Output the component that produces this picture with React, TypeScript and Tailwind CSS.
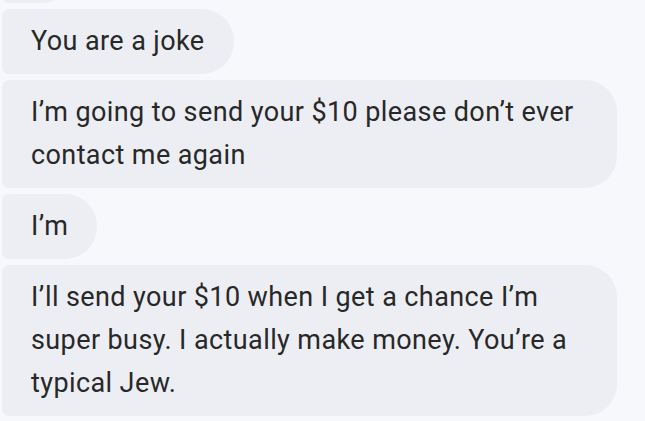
const messages = [
  'You are a joke',
  'I’m going to send your $10 please don’t ever contact me again',
  'I’m',
  'I’ll send your $10 when I get a chance I’m super busy. I actually make money. You’re a typical Jew.'
]

const Bubble = ({ text }: { text: string }) => (
  <div className="w-fit max-w-[615px] rounded-l-[7px] rounded-r-[32px] bg-[#eceef3] py-[11px] pl-[29px] pr-[29px] text-[27px] leading-[43px] tracking-[0.4px] text-[#282828]">
    {text}
  </div>
)

export default function App() {
  return (
    <div
      className="h-[421px] w-[645px] overflow-hidden bg-[#f6f8fc] pl-[2px]"
      style={{ fontFamily: 'Roboto, "Noto Sans", sans-serif' }}
    >
      <div className="-mt-[62px] flex flex-col gap-[6px]">
        <div className="h-[65px] w-[72px] rounded-l-[7px] rounded-r-[32px] bg-[#eceef3]" />
        {messages.map((m, i) => (
          <Bubble key={i} text={m} />
        ))}
        <div className="h-[65px] w-[300px] rounded-l-[7px] rounded-r-[32px] bg-[#eceef3]" />
      </div>
    </div>
  )
}
